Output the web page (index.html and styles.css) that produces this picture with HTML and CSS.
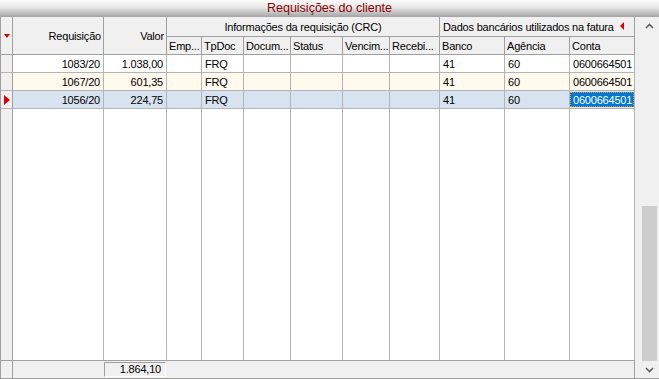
FILE: index.html
```html
<!DOCTYPE html>
<html lang="pt">
<head>
    <meta charset="UTF-8">
    <title>Requisições do cliente</title>
    <link rel="stylesheet" href="styles.css">
</head>
<body>
    <div class="window">
        <div class="title">Requisições do cliente</div>
        <div class="frame">
            <div class="table">
                <div class="head">
                    <div class="hc ind span2"><span class="tri-down"></span></div>
                    <div class="hc right span2">Requisição</div>
                    <div class="hc right span2">Valor</div>
                    <div class="hc group center">Informações da requisição (CRC)</div>
                    <div class="hc group2">Dados bancários utilizados na fatura <span class="tri-left"></span></div>
                    <div class="hc">Emp...</div>
                    <div class="hc">TpDoc</div>
                    <div class="hc">Docum...</div>
                    <div class="hc">Status</div>
                    <div class="hc">Vencim...</div>
                    <div class="hc">Recebi...</div>
                    <div class="hc">Banco</div>
                    <div class="hc">Agência</div>
                    <div class="hc">Conta</div>
                </div>
                <div class="rows">
                    <div class="row">
                        <div class="c ind"></div>
                        <div class="c right">1083/20</div>
                        <div class="c right">1.038,00</div>
                        <div class="c"></div>
                        <div class="c">FRQ</div>
                        <div class="c"></div>
                        <div class="c"></div>
                        <div class="c"></div>
                        <div class="c"></div>
                        <div class="c">41</div>
                        <div class="c">60</div>
                        <div class="c">0600664501</div>
                    </div>
                    <div class="row alt">
                        <div class="c ind"></div>
                        <div class="c right">1067/20</div>
                        <div class="c right">601,35</div>
                        <div class="c"></div>
                        <div class="c">FRQ</div>
                        <div class="c"></div>
                        <div class="c"></div>
                        <div class="c"></div>
                        <div class="c"></div>
                        <div class="c">41</div>
                        <div class="c">60</div>
                        <div class="c">0600664501</div>
                    </div>
                    <div class="row sel">
                        <div class="c ind"><span class="tri-right"></span></div>
                        <div class="c right">1056/20</div>
                        <div class="c right">224,75</div>
                        <div class="c"></div>
                        <div class="c">FRQ</div>
                        <div class="c"></div>
                        <div class="c"></div>
                        <div class="c"></div>
                        <div class="c"></div>
                        <div class="c">41</div>
                        <div class="c">60</div>
                        <div class="c focus"><span>0600664501</span></div>
                    </div>
                </div>
                <div class="filler">
                    <div class="f ind"></div>
                    <div class="f"></div>
                    <div class="f"></div>
                    <div class="f"></div>
                    <div class="f"></div>
                    <div class="f"></div>
                    <div class="f"></div>
                    <div class="f"></div>
                    <div class="f"></div>
                    <div class="f"></div>
                    <div class="f"></div>
                    <div class="f"></div>
                </div>
                <div class="foot">
                    <div class="foot-ind"></div>
                    <div class="foot-req"></div>
                    <div class="total">1.864,10</div>
                </div>
            </div>
            <div class="scroll">
                <div class="sb">
                    <div class="sb-btn">
                        <svg width="9" height="6" viewBox="0 0 9 6"><polyline points="1,5 4.5,1.5 8,5" fill="none" stroke="#606060" stroke-width="1.6"/></svg>
                    </div>
                    <div class="sb-track"><div class="sb-thumb"></div></div>
                    <div class="sb-btn">
                        <svg width="9" height="6" viewBox="0 0 9 6"><polyline points="1,1 4.5,4.5 8,1" fill="none" stroke="#606060" stroke-width="1.6"/></svg>
                    </div>
                </div>
            </div>
        </div>
    </div>
</body>
</html>
```

FILE: styles.css
```css
body {
    margin: 0;
    background: #ffffff;
}
.window {
    width: 659px;
    height: 379px;
    display: flex;
    flex-direction: column;
    font-family: "Liberation Sans", Arial, sans-serif;
    font-size: 11px;
    letter-spacing: -0.2px;
    color: #000000;
    background: #f0f0f0;
}
.title {
    height: 17px;
    line-height: 17px;
    text-align: center;
    color: #8b0000;
    font-size: 12.5px;
    letter-spacing: 0;
    background: linear-gradient(#fbfbfb, #e6e6e6 45%, #a4a4a4);
}
.frame {
    flex: 1;
    display: flex;
    border-bottom: 1px solid #a0a0a0;
    min-height: 0;
}
.table {
    width: 635px;
    display: flex;
    flex-direction: column;
    border-left: 1px solid #a0a0a0;
    box-sizing: border-box;
    background: #ffffff;
}
.head, .row, .filler {
    display: grid;
    grid-template-columns: 12px 91px 63px 35px 42px 47px 52px 47px 50px 65px 65px 65px;
}
.head {
    grid-template-rows: 20px 18px;
    background: #f0f0f0;
}
.hc {
    box-sizing: border-box;
    border-right: 1px solid #a0a0a0;
    border-bottom: 1px solid #a0a0a0;
    padding: 0 2px;
    display: flex;
    align-items: center;
    white-space: nowrap;
    overflow: hidden;
}
.span2 {
    grid-row: span 2;
}
.group {
    grid-column: span 6;
}
.group2 {
    grid-column: span 3;
    padding-left: 3px;
}
.center {
    justify-content: center;
}
.right {
    justify-content: flex-end;
}
.hc.ind {
    padding: 0;
    justify-content: center;
}
.tri-down {
    width: 0;
    height: 0;
    border-left: 3px solid transparent;
    border-right: 3px solid transparent;
    border-top: 4px solid #e00000;
    margin-top: 1px;
}
.tri-left {
    width: 0;
    height: 0;
    border-top: 4px solid transparent;
    border-bottom: 4px solid transparent;
    border-right: 4px solid #e00000;
    margin-left: 6px;
    margin-top: -1px;
}
.tri-right {
    width: 0;
    height: 0;
    border-top: 5px solid transparent;
    border-bottom: 5px solid transparent;
    border-left: 6px solid #e00000;
}
.row {
    grid-template-rows: 18px;
}
.c {
    box-sizing: border-box;
    border-right: 1px solid #b4b4b4;
    border-bottom: 1px solid #b4b4b4;
    padding: 0 3px;
    display: flex;
    align-items: center;
    white-space: nowrap;
    overflow: hidden;
}
.c.right {
    padding-right: 3px;
}
.c.ind {
    background: #f0f0f0;
    border-right-color: #a0a0a0;
    padding: 0 0 0 3px;
}
.alt .c {
    background: #fff9ee;
}
.sel .c {
    background: #d7e3f1;
}
.alt .c.ind, .sel .c.ind {
    background: #f0f0f0;
}
.sel .c.focus {
    padding: 1px 0 1px 0;
}
.focus span {
    flex: 1;
    height: 100%;
    box-sizing: border-box;
    background: #0078d7;
    color: #ffffff;
    border: 1px dotted #e8901c;
    padding-left: 2px;
    display: flex;
    align-items: center;
}
.filler {
    flex: 1;
}
.f {
    border-right: 1px solid #b4b4b4;
}
.f.ind {
    background: #f0f0f0;
    border-right-color: #a0a0a0;
}
.foot {
    height: 18px;
    box-sizing: border-box;
    border-top: 1px solid #a0a0a0;
    border-right: 1px solid #a0a0a0;
    background: #f0f0f0;
    display: flex;
    align-items: center;
}
.foot-ind {
    width: 12px;
    height: 100%;
    box-sizing: border-box;
    border-right: 1px solid #a0a0a0;
}
.foot-req {
    width: 91px;
}
.total {
    width: 62px;
    height: 15px;
    box-sizing: border-box;
    border-top: 1px solid #a0a0a0;
    border-left: 1px solid #a0a0a0;
    border-right: 1px solid #ffffff;
    border-bottom: 1px solid #ffffff;
    text-align: right;
    padding-right: 4px;
    line-height: 13px;
}
.scroll {
    width: 24px;
    background: #f0f0f0;
    padding-left: 6px;
    box-sizing: border-box;
}
.sb {
    width: 17px;
    height: 100%;
    display: flex;
    flex-direction: column;
}
.sb-btn {
    height: 17px;
    display: flex;
    align-items: center;
    justify-content: center;
}
.sb-track {
    flex: 1;
    display: flex;
    flex-direction: column;
    justify-content: flex-end;
}
.sb-thumb {
    height: 155px;
    margin: 0 1px;
    background: #cdcdcd;
}
```
